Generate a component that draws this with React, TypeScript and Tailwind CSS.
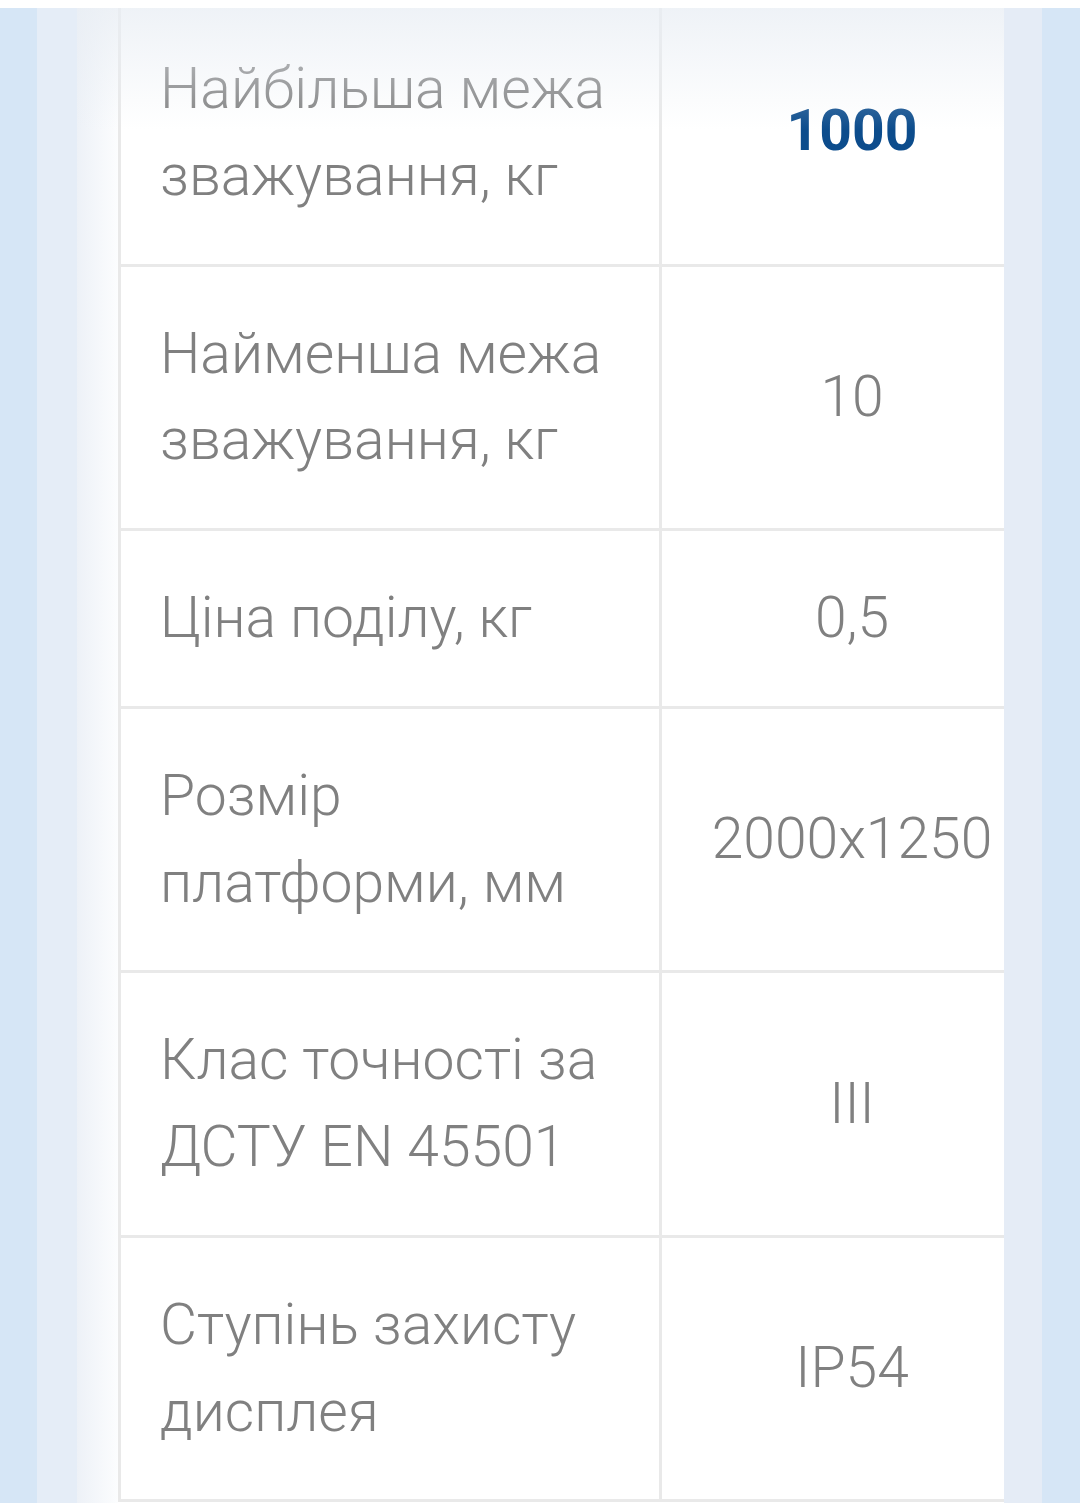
const rows: { label: string[]; value: string; strong?: boolean }[] = [
  { label: ['Найбільша межа', 'зважування, кг'], value: '1000', strong: true },
  { label: ['Найменша межа', 'зважування, кг'], value: '10' },
  { label: ['Ціна поділу, кг'], value: '0,5' },
  { label: ['Розмір', 'платформи, мм'], value: '2000x1250' },
  { label: ['Клас точності за', 'ДСТУ EN 45501'], value: 'III' },
  { label: ['Ступінь захисту', 'дисплея'], value: 'IP54' },
];

export default function App() {
  return (
    <div
      className="relative flex h-[1503px] w-[1080px] overflow-hidden bg-white"
      style={{ fontFamily: 'Roboto, "Noto Sans", sans-serif' }}
    >
      {/* left page gutter */}
      <div className="w-[37px] shrink-0 bg-[#d6e6f6]" />
      <div className="w-[40px] shrink-0 bg-[#e5edf7]" />
      <div className="w-[41px] shrink-0 bg-gradient-to-r from-[#edf1f7] to-[#fcfdfe]" />

      {/* spec table */}
      <div className="w-[886px] shrink-0">
        <table className="w-full border-collapse text-[57px] font-light leading-[86.75px] text-[#808080]">
          <tbody>
            {rows.map((r, i) => (
              <tr key={i}>
                <td
                  className={`w-[541px] border-[3px] border-[#e9e9e9] pl-[39px] pr-[20px] align-middle ${
                    i === 0 ? 'border-t-0 pt-[46px] pb-[44px]' : 'py-[44px]'
                  }`}
                >
                  {r.label.map((l, j) => (
                    <div key={j} className="whitespace-nowrap">
                      {l}
                    </div>
                  ))}
                </td>
                <td
                  className={`border-[3px] border-r-0 border-[#e9e9e9] pl-[40px] pr-[2px] text-center align-middle ${
                    i === 0 ? 'border-t-0' : ''
                  } ${r.strong ? 'font-bold text-[#0c4c8c]' : ''}`}
                >
                  {r.value}
                </td>
              </tr>
            ))}
          </tbody>
        </table>
      </div>

      {/* right page gutter */}
      <div className="w-[38px] shrink-0 bg-[#e5ecf6]" />
      <div className="w-[38px] shrink-0 bg-[#d6e6f6]" />

      {/* soft shade under header */}
      <div className="pointer-events-none absolute left-[77px] right-[76px] top-0 h-[130px] bg-gradient-to-b from-[#e9eef4]/80 to-transparent" />
      <div className="absolute inset-x-0 top-0 h-[8px] bg-white" />
    </div>
  );
}
